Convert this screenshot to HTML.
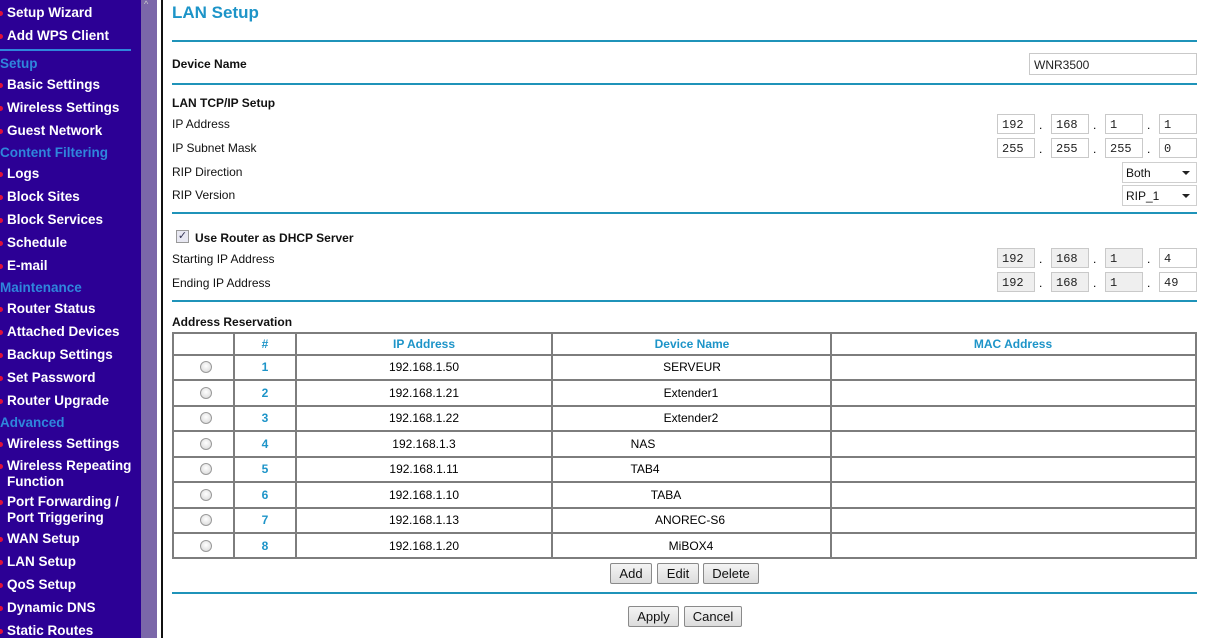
<!DOCTYPE html>
<html><head><meta charset="utf-8"><style>
*{margin:0;padding:0;box-sizing:border-box}
body{width:1205px;height:638px;overflow:hidden;background:#fff;font-family:"Liberation Sans",Arial,sans-serif;position:relative}
.sb{position:absolute;left:0;top:0;width:141px;height:638px;background:#2c0095}
.scr{position:absolute;left:141px;top:0;width:16px;height:638px;background:#7b67a9}
.bl{position:absolute;left:161px;top:0;width:2px;height:638px;background:#111}
.it{position:absolute;left:7px;color:#fff;font-weight:bold;font-size:13.5px;line-height:16px;white-space:nowrap}
.it:before{content:"";position:absolute;left:-9px;top:6px;width:5px;height:5px;border-radius:3px;background:#e0103a}
.hd{position:absolute;left:0;color:#2f86dc;font-weight:bold;font-size:13.5px;white-space:nowrap}
.a{position:absolute;white-space:nowrap}
.t{position:absolute;font-size:12px;color:#111;white-space:nowrap}
.b{font-weight:bold}
.hr{position:absolute;left:172px;width:1025px;height:2px;background:#1f93b9}
.in{position:absolute;height:20px;border:1px solid #c9c9c9;background:#fff;font-family:"Liberation Mono",monospace;font-size:12px;padding:3px 0 0 4px;color:#222}
.g{background:#efefef}
.dot{position:absolute;font-size:12px}
.sel{position:absolute;height:21px;border:1px solid #cfcfcf;background:#fff;font-size:12px;padding:3px 0 0 3px;color:#111}
.sel:after{content:"";position:absolute;right:6px;top:8px;border:4px solid transparent;border-top:4px solid #222}
.v{position:absolute;width:2px;background:#7d7d7d;top:332px;height:227px}
.h{position:absolute;left:172px;width:1025px;height:2px;background:#7d7d7d}
.c{position:absolute;font-size:12px;transform:translateX(-50%);white-space:nowrap}
.bh{color:#1d94c8;font-weight:bold}
.rad{position:absolute;left:200px;width:12px;height:12px;border-radius:6px;border:1px solid #9a9a9a;background:radial-gradient(circle at 50% 40%,#fff,#d4d4d4)}
.btn{position:absolute;height:21px;border:1px solid #8a8a8a;border-radius:2px;background:linear-gradient(#f4f4f4,#dcdcdc);font-size:13px;text-align:center;padding-top:2px;color:#111}
</style></head><body>
<div class="sb"></div><div class="scr"></div>
<div style="position:absolute;left:144px;top:0;width:10px;height:8px;color:#ccc;font-size:9px;line-height:8px">^</div>
<div class="bl"></div>
<div style="position:absolute;left:0;top:49px;width:131px;height:2px;background:#2f86dc"></div>
<div class="it" style="top:5px">Setup Wizard</div>
<div class="it" style="top:28px">Add WPS Client</div>
<div class="hd" style="top:56px">Setup</div>
<div class="it" style="top:77px">Basic Settings</div>
<div class="it" style="top:100px">Wireless Settings</div>
<div class="it" style="top:123px">Guest Network</div>
<div class="hd" style="top:145px">Content Filtering</div>
<div class="it" style="top:166px">Logs</div>
<div class="it" style="top:189px">Block Sites</div>
<div class="it" style="top:212px">Block Services</div>
<div class="it" style="top:235px">Schedule</div>
<div class="it" style="top:258px">E-mail</div>
<div class="hd" style="top:280px">Maintenance</div>
<div class="it" style="top:301px">Router Status</div>
<div class="it" style="top:324px">Attached Devices</div>
<div class="it" style="top:347px">Backup Settings</div>
<div class="it" style="top:370px">Set Password</div>
<div class="it" style="top:393px">Router Upgrade</div>
<div class="hd" style="top:415px">Advanced</div>
<div class="it" style="top:436px">Wireless Settings</div>
<div class="it" style="top:458px">Wireless Repeating<br>Function</div>
<div class="it" style="top:494px">Port Forwarding /<br>Port Triggering</div>
<div class="it" style="top:531px">WAN Setup</div>
<div class="it" style="top:554px">LAN Setup</div>
<div class="it" style="top:577px">QoS Setup</div>
<div class="it" style="top:600px">Dynamic DNS</div>
<div class="it" style="top:623px">Static Routes</div>

<div class="a b" style="left:172px;top:3px;font-size:17px;color:#1d94c8">LAN Setup</div>
<div class="hr" style="top:40px"></div>
<div class="t b" style="left:172px;top:57px">Device Name</div>
<div class="in" style="left:1029px;top:53px;width:168px;height:22px;font-family:'Liberation Sans',sans-serif;font-size:12px;padding-top:4px">WNR3500</div>
<div class="hr" style="top:83px"></div>
<div class="t b" style="left:172px;top:96px">LAN TCP/IP Setup</div>
<div class="t" style="left:172px;top:117px">IP Address</div>
<div class="t" style="left:172px;top:141px">IP Subnet Mask</div>
<div class="t" style="left:172px;top:165px">RIP Direction</div>
<div class="t" style="left:172px;top:188px">RIP Version</div>

<div class="in" style="left:997px;top:114px;width:38px">192</div><div class="dot" style="left:1039px;top:118px">.</div>
<div class="in" style="left:1051px;top:114px;width:38px">168</div><div class="dot" style="left:1093px;top:118px">.</div>
<div class="in" style="left:1105px;top:114px;width:38px">1</div><div class="dot" style="left:1147px;top:118px">.</div>
<div class="in" style="left:1159px;top:114px;width:38px">1</div>
<div class="in" style="left:997px;top:138px;width:38px">255</div><div class="dot" style="left:1039px;top:142px">.</div>
<div class="in" style="left:1051px;top:138px;width:38px">255</div><div class="dot" style="left:1093px;top:142px">.</div>
<div class="in" style="left:1105px;top:138px;width:38px">255</div><div class="dot" style="left:1147px;top:142px">.</div>
<div class="in" style="left:1159px;top:138px;width:38px">0</div>
<div class="sel" style="left:1122px;top:162px;width:75px">Both</div>
<div class="sel" style="left:1122px;top:185px;width:75px">RIP_1</div>
<div class="hr" style="top:212px"></div>

<div style="position:absolute;left:176px;top:230px;width:13px;height:13px;border:1px solid #999;background:#e8e8f2;font-size:11px;line-height:11px;text-align:center;color:#335">&#10003;</div>
<div class="t b" style="left:195px;top:231px">Use Router as DHCP Server</div>
<div class="t" style="left:172px;top:252px">Starting IP Address</div>
<div class="t" style="left:172px;top:276px">Ending IP Address</div>
<div class="in g" style="left:997px;top:248px;width:38px">192</div><div class="dot" style="left:1039px;top:252px">.</div>
<div class="in g" style="left:1051px;top:248px;width:38px">168</div><div class="dot" style="left:1093px;top:252px">.</div>
<div class="in g" style="left:1105px;top:248px;width:38px">1</div><div class="dot" style="left:1147px;top:252px">.</div>
<div class="in" style="left:1159px;top:248px;width:38px">4</div>
<div class="in g" style="left:997px;top:272px;width:38px">192</div><div class="dot" style="left:1039px;top:276px">.</div>
<div class="in g" style="left:1051px;top:272px;width:38px">168</div><div class="dot" style="left:1093px;top:276px">.</div>
<div class="in g" style="left:1105px;top:272px;width:38px">1</div><div class="dot" style="left:1147px;top:276px">.</div>
<div class="in" style="left:1159px;top:272px;width:38px">49</div>
<div class="hr" style="top:300px"></div>
<div class="t b" style="left:172px;top:315px">Address Reservation</div>

<div class="h" style="top:332px"></div><div class="h" style="top:354px"></div><div class="h" style="top:379px"></div><div class="h" style="top:405px"></div><div class="h" style="top:430px"></div><div class="h" style="top:456px"></div><div class="h" style="top:481px"></div><div class="h" style="top:507px"></div><div class="h" style="top:532px"></div><div class="h" style="top:557px"></div>
<div class="v" style="left:172px"></div><div class="v" style="left:233px"></div><div class="v" style="left:295px"></div><div class="v" style="left:551px"></div><div class="v" style="left:830px"></div><div class="v" style="left:1195px"></div>
<div class="c bh" style="left:265px;top:337px">#</div>
<div class="c bh" style="left:424px;top:337px">IP Address</div>
<div class="c bh" style="left:692px;top:337px">Device Name</div>
<div class="c bh" style="left:1013px;top:337px">MAC Address</div>

<div class="rad" style="top:361px"></div><div class="c bh" style="left:265px;top:360px">1</div><div class="c" style="left:424px;top:360px">192.168.1.50</div><div class="c" style="left:692px;top:360px">SERVEUR</div>
<div class="rad" style="top:387px"></div><div class="c bh" style="left:265px;top:386px">2</div><div class="c" style="left:424px;top:386px">192.168.1.21</div><div class="c" style="left:691px;top:386px">Extender1</div>
<div class="rad" style="top:412px"></div><div class="c bh" style="left:265px;top:411px">3</div><div class="c" style="left:424px;top:411px">192.168.1.22</div><div class="c" style="left:691px;top:411px">Extender2</div>
<div class="rad" style="top:438px"></div><div class="c bh" style="left:265px;top:437px">4</div><div class="c" style="left:424px;top:437px">192.168.1.3</div><div class="c" style="left:643px;top:437px">NAS</div>
<div class="rad" style="top:463px"></div><div class="c bh" style="left:265px;top:462px">5</div><div class="c" style="left:424px;top:462px">192.168.1.11</div><div class="c" style="left:645px;top:462px">TAB4</div>
<div class="rad" style="top:489px"></div><div class="c bh" style="left:265px;top:488px">6</div><div class="c" style="left:424px;top:488px">192.168.1.10</div><div class="c" style="left:666px;top:488px">TABA</div>
<div class="rad" style="top:514px"></div><div class="c bh" style="left:265px;top:513px">7</div><div class="c" style="left:424px;top:513px">192.168.1.13</div><div class="c" style="left:690px;top:513px">ANOREC-S6</div>
<div class="rad" style="top:540px"></div><div class="c bh" style="left:265px;top:539px">8</div><div class="c" style="left:424px;top:539px">192.168.1.20</div><div class="c" style="left:691px;top:539px">MiBOX4</div>

<div class="btn" style="left:610px;top:563px;width:42px">Add</div>
<div class="btn" style="left:657px;top:563px;width:42px">Edit</div>
<div class="btn" style="left:703px;top:563px;width:56px">Delete</div>
<div class="hr" style="top:592px"></div>
<div class="btn" style="left:628px;top:606px;width:51px">Apply</div>
<div class="btn" style="left:684px;top:606px;width:58px">Cancel</div>
</body></html>
